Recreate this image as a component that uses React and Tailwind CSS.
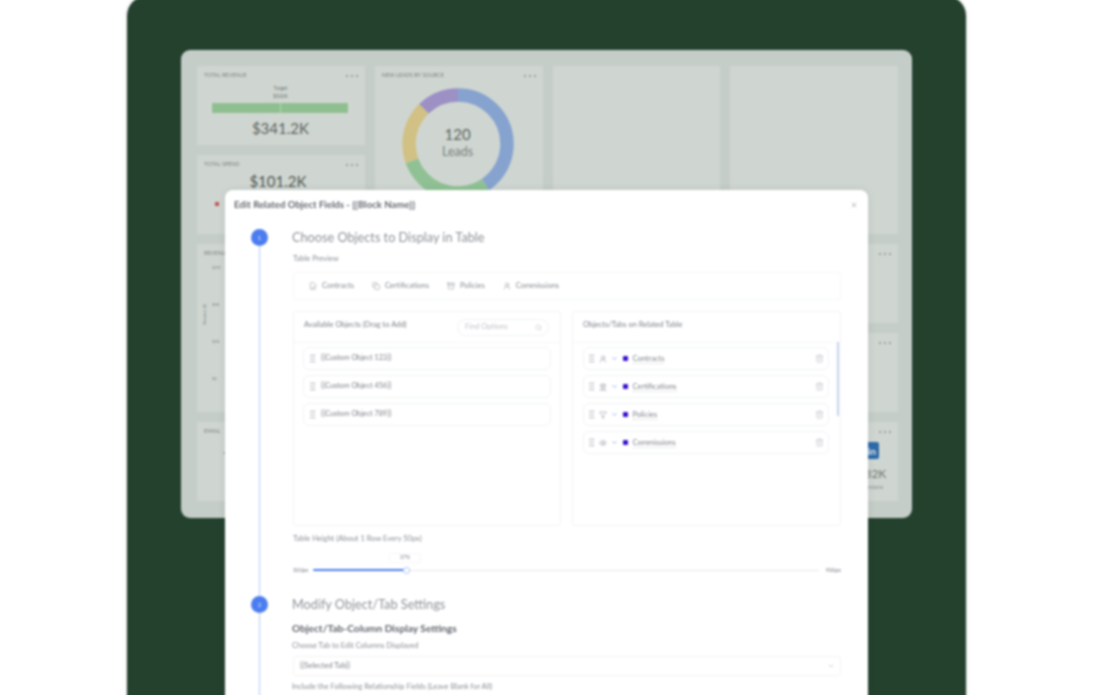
import React from 'react';
import { X, Search, ChevronDown, GripVertical, Trash2, FileSignature, Copy, Archive, UserRound, Landmark, Filter, Eye } from 'lucide-react';

const tabs = [
  { label: 'Contracts', Icon: FileSignature },
  { label: 'Certifications', Icon: Copy },
  { label: 'Policies', Icon: Archive },
  { label: 'Commissions', Icon: UserRound },
];

const selected = [
  { label: 'Contracts', Icon: UserRound },
  { label: 'Certifications', Icon: Landmark },
  { label: 'Policies', Icon: Filter },
  { label: 'Commissions', Icon: Eye },
];

function CardTitle({ title }) {
  return (
    <div className="flex items-center justify-between pl-[7px] pr-[7px] pt-[3px] h-[16px]">
      <span className="text-[5.3px] tracking-[0.02em] text-[#7a827d]">{title}</span>
      <span className="flex gap-[3px]">
        <i className="w-[2px] h-[2px] rounded-full bg-[#8b928e]" />
        <i className="w-[2px] h-[2px] rounded-full bg-[#8b928e]" />
        <i className="w-[2px] h-[2px] rounded-full bg-[#8b928e]" />
      </span>
    </div>
  );
}

function Donut() {
  return (
    <svg viewBox="0 0 112 112" className="w-[112px] h-[112px]">
      <g fill="none" strokeWidth="13.5">
        <circle cx="56" cy="56" r="49" stroke="#86a3cf" pathLength="360" strokeDasharray="146 214" transform="rotate(-90 56 56)" />
        <circle cx="56" cy="56" r="49" stroke="#90c194" pathLength="360" strokeDasharray="104 256" transform="rotate(56 56 56)" />
        <circle cx="56" cy="56" r="49" stroke="#d1c184" pathLength="360" strokeDasharray="66 294" transform="rotate(160 56 56)" />
        <circle cx="56" cy="56" r="49" stroke="#9c90c5" pathLength="360" strokeDasharray="44 316" transform="rotate(226 56 56)" />
      </g>
    </svg>
  );
}

function Dashboard() {
  return (
    <div className="w-[731px] h-[468px] rounded-[9px] bg-[#c5cdc9] pt-[16px] pl-[16px] pr-[14px] pb-[17px] grid grid-cols-4 grid-rows-5 gap-[10px]">
      <div className="bg-[#cfd6d1]">
        <CardTitle title="TOTAL REVENUE" />
        <div className="flex flex-col items-center -ml-[1px]">
          <span className="text-[5px] leading-[8px] mt-[2px] text-[#6f7772]">Target</span>
          <span className="text-[5px] leading-[8px] text-[#6f7772]">$500K</span>
          <div className="w-[136px] h-[10px] mt-[3px] rounded-[1px] bg-[#8fbf90] flex justify-center">
            <div className="w-[1px] h-full bg-[#b4d3b3]" />
          </div>
          <span className="text-[15px] leading-[20px] mt-[5px] text-[#5c645f]">$341.2K</span>
        </div>
      </div>

      <div className="bg-[#cfd6d1] row-start-2">
        <CardTitle title="TOTAL SPEND" />
        <div className="text-center text-[15px] leading-[20px] -ml-[6px] text-[#4f5752]">$101.2K</div>
        <div className="w-[4px] h-[4px] ml-[18px] mt-[11px] bg-[#c0575a]" />
      </div>

      <div className="bg-[#cfd6d1] row-span-2 row-start-1 col-start-2">
        <CardTitle title="NEW LEADS BY SOURCE" />
        <div className="relative mx-auto w-[112px] h-[112px] mt-[6px] -translate-x-[1px]">
          <Donut />
          <div className="absolute inset-0 flex flex-col items-center justify-center -mt-[5px] text-[#5c645f]">
            <span className="text-[15px] leading-[20px]">120</span>
            <span className="text-[12.5px] leading-[15px] text-[#7a827d]">Leads</span>
          </div>
        </div>
      </div>

      <div className="bg-[#cfd6d1] row-span-2 row-start-1 col-start-3" />
      <div className="bg-[#cfd6d1] row-span-2 row-start-1 col-start-4" />

      <div className="bg-[#cfd6d1] row-span-2 row-start-3 col-span-3">
        <CardTitle title="REVENUE" />
        <div className="flex">
          <div className="w-[14px] pl-[6px] pt-[60px]">
            <span className="block text-[4px] text-[#7a827d] -rotate-90 whitespace-nowrap w-[3px]">Revenue ($)</span>
          </div>
          <div className="text-[4px] text-[#7a827d] mt-[5px] ml-[1px] flex flex-col gap-[31px]">
            <span>$1M</span>
            <span>$5K</span>
            <span>$1K</span>
            <span>$0</span>
          </div>
        </div>
      </div>

      <div className="bg-[#cfd6d1] row-start-3 col-start-4">
        <CardTitle title="" />
      </div>
      <div className="bg-[#cfd6d1] row-start-4 col-start-4">
        <CardTitle title="" />
        <div className="w-[2px] h-[10px] ml-[136px] mt-[22px] bg-[#a9cfae]" />
      </div>

      <div className="bg-[#cfd6d1] row-start-5 col-span-3">
        <CardTitle title="EMAIL" />
        <div className="w-[2px] h-[2px] ml-[26px] mt-[14px] rounded-full bg-[#86a3cf]" />
      </div>
      <div className="bg-[#cfd6d1] row-start-5 col-start-4">
        <CardTitle title="" />
        <div className="flex justify-end pr-[9px]">
          <div className="w-[44px] flex flex-col items-center">
            <div className="w-[24px] h-[17px] rounded-[2px] bg-[#2d6aa8] mt-[4px] flex items-center justify-end pr-[3px]">
              <span className="text-[10px] leading-none font-bold text-[#dfe6ea]">in</span>
            </div>
            <span className="text-[12px] leading-[14px] mt-[8px] text-[#6f7772]">$1.32K</span>
            <span className="text-[6px] leading-[8px] mt-[2px] text-[#8b928e]">Conversions</span>
          </div>
        </div>
      </div>
    </div>
  );
}

function StepDot({ n }) {
  return (
    <div className="w-[17px] h-[17px] rounded-full bg-[#4c7df0] flex items-center justify-center text-[6px] text-[#dbe5fd] shrink-0">
      {n}
    </div>
  );
}

function LeftRow({ label }) {
  return (
    <div className="h-[23px] rounded-[6px] border border-[#f1f3f5] flex items-center pl-[3px] gap-[3px]">
      <GripVertical size={11} strokeWidth={1.8} className="text-[#9ba1aa]" />
      <span className="text-[7.2px] text-[#7d8189]">{label}</span>
    </div>
  );
}

function RightRow({ label, Icon }) {
  return (
    <div className="h-[23px] rounded-[6px] border border-[#f1f3f5] flex items-center pl-[2px] pr-[4px]">
      <GripVertical size={11} strokeWidth={1.8} className="text-[#9ba1aa]" />
      <Icon size={8} strokeWidth={1.7} className="text-[#8e929a] ml-[2px]" />
      <ChevronDown size={7} strokeWidth={2.6} className="text-[#6f9af5] ml-[3.5px]" />
      <span className="w-[5px] h-[5px] ml-[5px] rounded-[1px] bg-[#3a10d0]" />
      <span className="ml-[5px] text-[7.5px] text-[#7d8189] border-b border-dotted border-[#d4d6da] leading-[9px]">{label}</span>
      <Trash2 size={9} strokeWidth={1.4} className="text-[#aeb3ba] ml-auto" />
    </div>
  );
}

function Modal() {
  return (
    <div className="absolute left-[98px] top-[194px] w-[643px] h-[540px] rounded-t-[8px] bg-white shadow-[0_0_8px_rgba(0,0,0,0.08)]">
      <div className="h-[30px] flex items-center justify-between pl-[9px] pr-[10px]">
        <span className="text-[9.6px] font-bold leading-[12px] text-[#63676f]">Edit Related Object Fields - {'{{Block Name}}'}</span>
        <X size={8} strokeWidth={2.4} className="text-[#a0a5b0]" />
      </div>

      <div className="flex pl-[26px] pr-[27px] mt-[9px]">
        <div className="flex flex-col items-center w-[17px] h-[500px]">
          <StepDot n="1" />
          <div className="w-[1.5px] h-[350px] bg-[#b3c8fb]" />
          <StepDot n="2" />
          <div className="w-[1.5px] flex-1 bg-[#b3c8fb]" />
        </div>

        <div className="ml-[24px] flex-1 min-w-0">
          <h2 className="text-[12.7px] leading-[17px] text-[#8e9198]">Choose Objects to Display in Table</h2>
          <p className="text-[7.5px] leading-[9px] mt-[8px] ml-[1px] text-[#8a8e95]">Table Preview</p>

          <div className="h-[28px] mt-[9px] ml-[1px] rounded-[3px] border border-[#f5f6f7] flex items-center pl-[15px] gap-[18px]">
            {tabs.map(({ label, Icon }) => (
              <span key={label} className="flex items-center gap-[5px] text-[7.5px] text-[#85898f]">
                <Icon size={8} strokeWidth={1.6} className="text-[#8e929a]" />
                {label}
              </span>
            ))}
          </div>

          <div className="flex gap-[11px] mt-[11px] ml-[1px]">
            <div className="w-[268px] h-[215px] rounded-[3px] border border-[#f3f4f6]">
              <div className="h-[31px] border-b border-[#f5f6f7] flex items-center justify-between pl-[10px] pr-[11px]">
                <span className="text-[7.5px] text-[#7d8189] -mt-[4px]">Available Objects (Drag to Add)</span>
                <div className="w-[92px] h-[17px] rounded-full border border-[#f1f3f5] flex items-center justify-between pl-[7px] pr-[6px]">
                  <span className="text-[7.5px] text-[#bfc2c7]">Find Options</span>
                  <Search size={7} strokeWidth={1.6} className="text-[#aeb3ba]" />
                </div>
              </div>
              <div className="flex flex-col gap-[5px] px-[9px] pt-[4px]">
                <LeftRow label="{{Custom Object 123}}" />
                <LeftRow label="{{Custom Object 456}}" />
                <LeftRow label="{{Custom Object 789}}" />
              </div>
            </div>

            <div className="relative w-[269px] h-[215px] rounded-[3px] border border-[#f3f4f6]">
              <div className="h-[31px] border-b border-[#f5f6f7] flex items-center pl-[10px]">
                <span className="text-[7.5px] text-[#7d8189] -mt-[4px]">Objects/Tabs on Related Table</span>
              </div>
              <div className="flex flex-col gap-[5px] pl-[10px] pr-[11px] pt-[4px]">
                {selected.map((row) => (
                  <RightRow key={row.label} {...row} />
                ))}
              </div>
              <div className="absolute right-[1px] top-[30px] w-[2px] h-[74px] bg-[#c5d3ee]" />
            </div>
          </div>

          <p className="text-[7.5px] leading-[9px] mt-[8px] ml-[1px] text-[#8a8e95]">Table Height (About 1 Row Every 50px)</p>

          <div className="relative flex items-center h-[10px] mt-[22px] ml-[1px]">
            <span className="text-[5.5px] w-[20px] text-[#7d8189]">300px</span>
            <div className="flex-1 flex items-center">
              <div className="w-[93px] h-[2.5px] rounded-full bg-[#4c7df0]" />
              <div className="w-[7px] h-[7px] -mx-[3.5px] rounded-full border border-[#a7bff7] bg-white z-10" />
              <div className="flex-1 h-[1px] bg-[#e3e7e8]" />
            </div>
            <span className="text-[5.5px] w-[22px] text-right text-[#7d8189]">900px</span>
            <div className="absolute left-[96px] -top-[12px] w-[32px] h-[10px] rounded-[2px] border border-[#f6f7f8] bg-white flex items-center justify-center text-[5px] text-[#7d8189]">
              37%
            </div>
          </div>

          <h2 className="text-[12.7px] leading-[17px] mt-[21px] text-[#8e9198]">Modify Object/Tab Settings</h2>
          <h3 className="text-[10.2px] font-bold leading-[12px] mt-[9px] text-[#5f636b]">Object/Tab-Column Display Settings</h3>
          <p className="text-[7.5px] leading-[9px] mt-[7px] text-[#8a8e95]">Choose Tab to Edit Columns Displayed</p>
          <div className="h-[20px] mt-[6px] ml-[1px] rounded-[3px] border border-[#f3f4f6] flex items-center justify-between pl-[6px] pr-[5px]">
            <span className="text-[7.5px] text-[#7d8189]">{'{{Selected Tab}}'}</span>
            <ChevronDown size={8} strokeWidth={1.8} className="text-[#a9aeb6]" />
          </div>
          <p className="text-[7.5px] leading-[9px] mt-[6px] text-[#8a8e95]">Include the Following Relationship Fields (Leave Blank for All)</p>
        </div>
      </div>
    </div>
  );
}

export default function App() {
  return (
    <div className="w-[1110px] h-[695px] overflow-hidden bg-white font-['Lato',sans-serif]">
      <div className="blur-[0.8px]">
        <div className="relative ml-[127px] w-[839px] h-[760px] -mt-[4px] rounded-[20px] bg-[#24412e] pt-[54px] pl-[54px] shadow-[0_0_4px_rgba(0,0,0,0.15)]">
          <Dashboard />
          <Modal />
        </div>
      </div>
    </div>
  );
}
